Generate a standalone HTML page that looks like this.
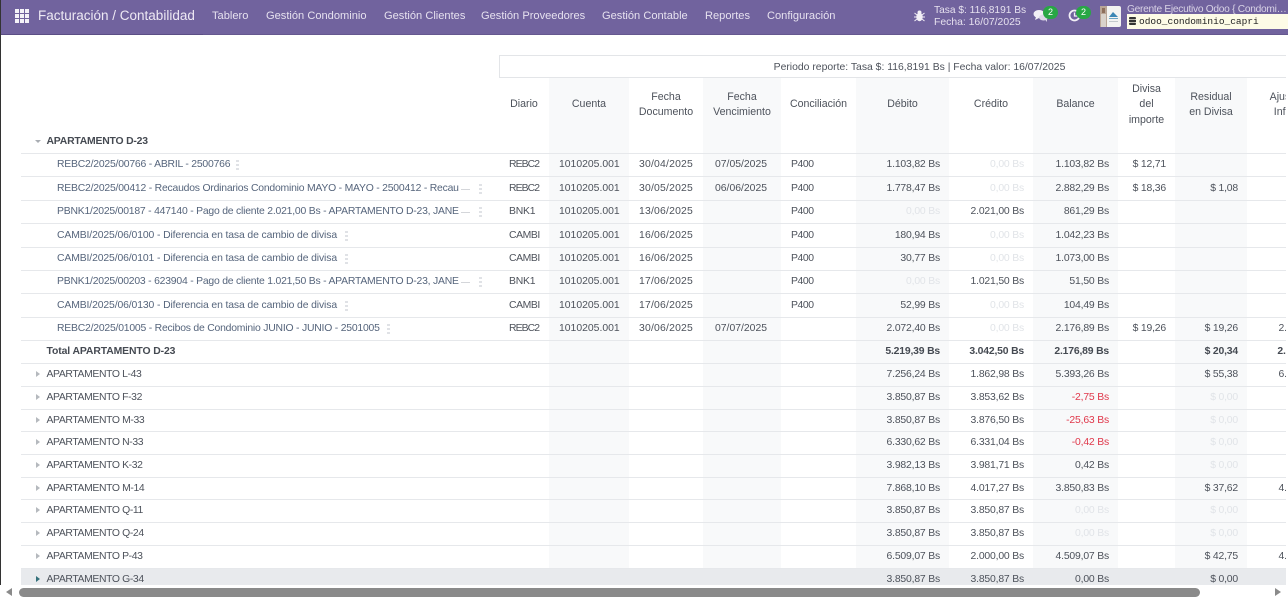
<!DOCTYPE html>
<html lang="es">
<head>
<meta charset="utf-8">
<title>Facturación / Contabilidad</title>
<style>
html,body{margin:0;padding:0;background:#fff}
body{width:1288px;height:598px;position:relative;overflow:hidden;font-family:"Liberation Sans",sans-serif;font-size:10.4px;color:#4d525b}
.edge{position:absolute;left:0;top:0;width:1px;height:585px;background:#333;z-index:5}
.nav{position:absolute;left:0;top:0;width:1288px;height:34px;background:#71639e;color:#e6e1ef;border-bottom:1px solid #65588f;box-sizing:content-box}
.navl{position:absolute;left:0;top:34px;width:203px;height:1px;background:#5b4e85}
.nav span.t{position:absolute;top:10px;line-height:13px;white-space:nowrap;font-size:11.1px}
.brand{position:absolute;left:38px;top:7px;line-height:18px;font-size:13.5px;white-space:nowrap;color:#eee9f4}
.grid{position:absolute;left:15px;top:9px;width:14px;height:14px;display:grid;grid-template-columns:4px 4px 4px;grid-template-rows:4px 4px 4px;gap:1px}
.grid i{background:#f4f2f8;display:block}
.badge{position:absolute;top:6px;width:15px;height:13px;border-radius:7px;background:#28a745;color:#fff;font-size:9px;line-height:13px;text-align:center}
.yellow{position:absolute;left:1127px;top:14px;width:161px;height:15px;background:#fdfbe6;color:#222;font-family:"Liberation Mono",monospace;font-size:9.5px;line-height:15px}
.yellow b{font-weight:normal;position:absolute;left:12px;top:0}
.wrap{position:absolute;left:1px;top:36px;width:1285px;height:549px;overflow:hidden;background:#fff}
.box{position:absolute;left:498px;top:19px;width:840px;height:23px;border:1px solid #e3e5e8;border-right:0;box-sizing:border-box;text-align:center;line-height:22px;padding-top:1px;color:#4d525b;font-size:10.4px}
table{position:absolute;left:20px;top:42px;border-collapse:separate;border-spacing:0;table-layout:fixed;width:1319px}
td,th{padding:0 9px;white-space:nowrap;overflow:hidden;line-height:12px;font-size:10.4px;font-weight:normal;box-sizing:border-box}
th{line-height:15.5px;text-align:center;white-space:normal;padding:2px 4px 0;vertical-align:middle;font-size:10.6px}
td{border-bottom:1px solid #e6e8eb;vertical-align:middle;padding-top:.5px}
.gl{background:#f8f9fa}
td.n{position:relative;padding-left:36px;color:#56657c;overflow:visible;letter-spacing:-.21px}
td.n.c{letter-spacing:-.12px}
td.g{padding-left:25.5px;position:relative;color:#4d525b;overflow:visible;letter-spacing:-.37px}
td.g.b{letter-spacing:-.2px}
td.l{padding-left:10px}
td.v{padding-left:12px}
td.dt{letter-spacing:.2px}
td.r{text-align:right;letter-spacing:-.18px}
td.b{font-weight:bold;color:#454a52}
td.d1{letter-spacing:-.9px}
td.d2{letter-spacing:-.4px}
td.d3{letter-spacing:-.2px}
td.p{letter-spacing:-.4px}
td.aj{padding-right:8px}
.z{color:#e1e4e8}
.red{color:#e0384b}
.k{position:absolute;top:50%;margin-top:-5px;width:3px;height:10px;background:repeating-linear-gradient(#e0e2e6 0 2px,transparent 2px 4px)}
.dots{position:absolute;top:50%;margin-top:0;left:440px;width:9px;height:1px;background:#d4d6da}
.ar{position:absolute;left:15px;top:50%;margin-top:-4px;width:0;height:0;border-left:4px solid #b5b9be;border-top:3px solid transparent;border-bottom:3px solid transparent}
.ad{position:absolute;left:14px;top:50%;margin-top:-2px;width:0;height:0;border-top:3px solid #a9adb3;border-left:3.5px solid transparent;border-right:3.5px solid transparent}
tr.hl td{background:#e8eaed}
.bar{position:absolute;left:0;top:585px;width:1288px;height:13px;background:#fff}
.thumb{position:absolute;left:19px;top:3px;width:1181px;height:9px;border-radius:5px;background:#8a8a8a}
.al{position:absolute;left:6px;top:3px;width:0;height:0;border-right:6px solid #8a8a8a;border-top:4.5px solid transparent;border-bottom:4.5px solid transparent}
.arr{position:absolute;left:1275px;top:3px;width:0;height:0;border-left:6px solid #8a8a8a;border-top:4.5px solid transparent;border-bottom:4.5px solid transparent}
</style>
</head>
<body>
<div class="edge"></div>
<div class="nav">
  <div class="grid"><i></i><i></i><i></i><i></i><i></i><i></i><i></i><i></i><i></i></div>
  <div class="brand">Facturación / Contabilidad</div>
  <span class="t" style="left:212px">Tablero</span>
  <span class="t" style="left:266px">Gestión Condominio</span>
  <span class="t" style="left:384px">Gestión Clientes</span>
  <span class="t" style="left:481px">Gestión Proveedores</span>
  <span class="t" style="left:602px">Gestión Contable</span>
  <span class="t" style="left:705px">Reportes</span>
  <span class="t" style="left:767px">Configuración</span>
  <svg style="position:absolute;left:914px;top:10px" width="11" height="12" viewBox="0 0 11 12"><ellipse cx="5.500" cy="7" rx="3.200" ry="4.200" fill="#f2eff6"/><circle cx="5.500" cy="2.500" r="2" fill="#f2eff6"/><path d="M0.500 3l2.500 2M10.500 3l-2.500 2M0 7h3M11 7H8M0.500 11l2.500-2M10.500 11L8 9" stroke="#f2eff6" stroke-width="1" fill="none"/></svg>
  <span class="t" style="left:934px;top:4px;font-size:10.2px">Tasa $: 116,8191 Bs</span>
  <span class="t" style="left:934px;top:16px;font-size:10.4px">Fecha: 16/07/2025</span>
  <svg style="position:absolute;left:1033px;top:9px" width="16" height="14" viewBox="0 0 16 14"><ellipse cx="6" cy="5" rx="5.500" ry="4" fill="#f2eff6"/><path d="M3 8l-1 3 4-2z" fill="#f2eff6"/><ellipse cx="10.500" cy="8.500" rx="4.500" ry="3" fill="#dcd7e8"/><path d="M12 10.500l2 2.500v-3z" fill="#dcd7e8"/></svg>
  <div class="badge" style="left:1043px">2</div>
  <svg style="position:absolute;left:1068px;top:9px" width="13" height="13" viewBox="0 0 13 13"><circle cx="6.500" cy="6.500" r="5" fill="none" stroke="#f2eff6" stroke-width="1.800"/><path d="M6.500 3.500v3.500h3" fill="none" stroke="#f2eff6" stroke-width="1.300"/></svg>
  <div class="badge" style="left:1076px">2</div>
  <svg style="position:absolute;left:1100px;top:6px" width="21" height="21" viewBox="0 0 21 21"><rect width="21" height="21" rx="2" fill="#f3f3f1"/><rect x="0" y="0" width="7" height="21" fill="#b9a596"/><rect x="2" y="2" width="3" height="5" fill="#8e6f5c"/><rect x="1" y="8" width="5" height="13" fill="#d9d2cb"/><path d="M9 11l4-5 5 5z" fill="#3c87b5"/><rect x="9" y="12" width="9" height="1" fill="#6aa5c6"/><rect x="9" y="15" width="9" height="1" fill="#c3c9cc"/></svg>
  <span class="t" style="left:1127px;top:3px;font-size:10.2px;color:#d9d3e6;letter-spacing:-.28px">Gerente Ejecutivo Odoo { Condomi…</span>
  <div class="yellow"><svg style="position:absolute;left:2px;top:3px" width="7" height="8" viewBox="0 0 7 8"><rect width="7" height="2.200" rx="1" fill="#333"/><rect y="2.900" width="7" height="2.200" fill="#333"/><rect y="5.800" width="7" height="2.200" rx="1" fill="#333"/></svg><b>odoo_condominio_capri</b></div>
</div>
<div class="navl"></div>
<div class="wrap">
  <div class="box">Periodo reporte: Tasa $: 116,8191 Bs | Fecha valor: 16/07/2025</div>
  <table>
    <colgroup>
      <col style="width:478px"><col style="width:50px"><col class="gl" style="width:80px"><col style="width:74px"><col class="gl" style="width:78px"><col style="width:75px"><col class="gl" style="width:93px"><col style="width:84px"><col class="gl" style="width:85px"><col style="width:57px"><col class="gl" style="width:72px"><col style="width:93px">
    </colgroup>
    <tr style="height:52px"><th></th><th>Diario</th><th>Cuenta</th><th>Fecha Documento</th><th>Fecha Vencimiento</th><th>Conciliación</th><th>Débito</th><th>Crédito</th><th>Balance</th><th>Divisa<br>del<br>importe</th><th>Residual<br>en Divisa</th><th>Ajuste por Inflación</th></tr>
    <tr style="height:24px"><td class="g b"><span class="ad"></span>APARTAMENTO D-23</td><td></td><td></td><td></td><td></td><td></td><td></td><td></td><td></td><td></td><td></td><td></td></tr>

    <tr style="height:23px"><td class="n">REBC2/2025/00766 - ABRIL - 2500766<span class="k" style="left:215px"></span></td><td class="l d1">REBC2</td><td class="l">1010205.001</td><td class="l dt">30/04/2025</td><td class="v">07/05/2025</td><td class="l p">P400</td><td class="r">1.103,82 Bs</td><td class="r z">0,00 Bs</td><td class="r">1.103,82 Bs</td><td class="r">$ 12,71</td><td></td><td></td></tr>
    <tr style="height:24px"><td class="n">REBC2/2025/00412 - Recaudos Ordinarios Condominio MAYO - MAYO - 2500412 - Recau<span class="dots"></span><span class="k" style="left:458px"></span></td><td class="l d1">REBC2</td><td class="l">1010205.001</td><td class="l dt">30/05/2025</td><td class="v">06/06/2025</td><td class="l p">P400</td><td class="r">1.778,47 Bs</td><td class="r z">0,00 Bs</td><td class="r">2.882,29 Bs</td><td class="r">$ 18,36</td><td class="r">$ 1,08</td><td></td></tr>
    <tr style="height:23px"><td class="n">PBNK1/2025/00187 - 447140 - Pago de cliente 2.021,00 Bs - APARTAMENTO D-23, JANE<span class="dots"></span><span class="k" style="left:458px"></span></td><td class="l d3">BNK1</td><td class="l">1010205.001</td><td class="l dt">13/06/2025</td><td></td><td class="l p">P400</td><td class="r z">0,00 Bs</td><td class="r">2.021,00 Bs</td><td class="r">861,29 Bs</td><td></td><td></td><td></td></tr>
    <tr style="height:24px"><td class="n c">CAMBI/2025/06/0100 - Diferencia en tasa de cambio de divisa<span class="k" style="left:324px"></span></td><td class="l d2">CAMBI</td><td class="l">1010205.001</td><td class="l dt">16/06/2025</td><td></td><td class="l p">P400</td><td class="r">180,94 Bs</td><td class="r z">0,00 Bs</td><td class="r">1.042,23 Bs</td><td></td><td></td><td></td></tr>
    <tr style="height:23px"><td class="n c">CAMBI/2025/06/0101 - Diferencia en tasa de cambio de divisa<span class="k" style="left:324px"></span></td><td class="l d2">CAMBI</td><td class="l">1010205.001</td><td class="l dt">16/06/2025</td><td></td><td class="l p">P400</td><td class="r">30,77 Bs</td><td class="r z">0,00 Bs</td><td class="r">1.073,00 Bs</td><td></td><td></td><td></td></tr>
    <tr style="height:23px"><td class="n">PBNK1/2025/00203 - 623904 - Pago de cliente 1.021,50 Bs - APARTAMENTO D-23, JANE<span class="dots"></span><span class="k" style="left:458px"></span></td><td class="l d3">BNK1</td><td class="l">1010205.001</td><td class="l dt">17/06/2025</td><td></td><td class="l p">P400</td><td class="r z">0,00 Bs</td><td class="r">1.021,50 Bs</td><td class="r">51,50 Bs</td><td></td><td></td><td></td></tr>
    <tr style="height:24px"><td class="n c">CAMBI/2025/06/0130 - Diferencia en tasa de cambio de divisa<span class="k" style="left:324px"></span></td><td class="l d2">CAMBI</td><td class="l">1010205.001</td><td class="l dt">17/06/2025</td><td></td><td class="l p">P400</td><td class="r">52,99 Bs</td><td class="r z">0,00 Bs</td><td class="r">104,49 Bs</td><td></td><td></td><td></td></tr>
    <tr style="height:23px"><td class="n">REBC2/2025/01005 - Recibos de Condominio JUNIO - JUNIO - 2501005<span class="k" style="left:366px"></span></td><td class="l d1">REBC2</td><td class="l">1010205.001</td><td class="l dt">30/06/2025</td><td class="v">07/07/2025</td><td></td><td class="r">2.072,40 Bs</td><td class="r z">0,00 Bs</td><td class="r">2.176,89 Bs</td><td class="r">$ 19,26</td><td class="r">$ 19,26</td><td class="r aj">2.176,89 Bs</td></tr>
    <tr style="height:23px"><td class="g b" style="letter-spacing:-.1px">Total APARTAMENTO D-23</td><td></td><td></td><td></td><td></td><td></td><td class="r b">5.219,39 Bs</td><td class="r b">3.042,50 Bs</td><td class="r b">2.176,89 Bs</td><td></td><td class="r b">$ 20,34</td><td class="r b aj">2.176,89 Bs</td></tr>

    <tr style="height:23px"><td class="g"><span class="ar"></span>APARTAMENTO L-43</td><td></td><td></td><td></td><td></td><td></td><td class="r">7.256,24 Bs</td><td class="r">1.862,98 Bs</td><td class="r">5.393,26 Bs</td><td></td><td class="r">$ 55,38</td><td class="r aj">6.393,26 Bs</td></tr>
    <tr style="height:23px"><td class="g"><span class="ar"></span>APARTAMENTO F-32</td><td></td><td></td><td></td><td></td><td></td><td class="r">3.850,87 Bs</td><td class="r">3.853,62 Bs</td><td class="r red">-2,75 Bs</td><td></td><td class="r z">$ 0,00</td><td></td></tr>
    <tr style="height:22px"><td class="g"><span class="ar"></span>APARTAMENTO M-33</td><td></td><td></td><td></td><td></td><td></td><td class="r">3.850,87 Bs</td><td class="r">3.876,50 Bs</td><td class="r red">-25,63 Bs</td><td></td><td class="r z">$ 0,00</td><td></td></tr>
    <tr style="height:23px"><td class="g"><span class="ar"></span>APARTAMENTO N-33</td><td></td><td></td><td></td><td></td><td></td><td class="r">6.330,62 Bs</td><td class="r">6.331,04 Bs</td><td class="r red">-0,42 Bs</td><td></td><td class="r z">$ 0,00</td><td></td></tr>
    <tr style="height:23px"><td class="g"><span class="ar"></span>APARTAMENTO K-32</td><td></td><td></td><td></td><td></td><td></td><td class="r">3.982,13 Bs</td><td class="r">3.981,71 Bs</td><td class="r">0,42 Bs</td><td></td><td class="r z">$ 0,00</td><td></td></tr>
    <tr style="height:22px"><td class="g"><span class="ar"></span>APARTAMENTO M-14</td><td></td><td></td><td></td><td></td><td></td><td class="r">7.868,10 Bs</td><td class="r">4.017,27 Bs</td><td class="r">3.850,83 Bs</td><td></td><td class="r">$ 37,62</td><td class="r aj">4.850,83 Bs</td></tr>
    <tr style="height:23px"><td class="g"><span class="ar"></span>APARTAMENTO Q-11</td><td></td><td></td><td></td><td></td><td></td><td class="r">3.850,87 Bs</td><td class="r">3.850,87 Bs</td><td class="r z">0,00 Bs</td><td></td><td class="r z">$ 0,00</td><td></td></tr>
    <tr style="height:23px"><td class="g"><span class="ar"></span>APARTAMENTO Q-24</td><td></td><td></td><td></td><td></td><td></td><td class="r">3.850,87 Bs</td><td class="r">3.850,87 Bs</td><td class="r z">0,00 Bs</td><td></td><td class="r z">$ 0,00</td><td></td></tr>
    <tr style="height:23px"><td class="g"><span class="ar"></span>APARTAMENTO P-43</td><td></td><td></td><td></td><td></td><td></td><td class="r">6.509,07 Bs</td><td class="r">2.000,00 Bs</td><td class="r">4.509,07 Bs</td><td></td><td class="r">$ 42,75</td><td class="r aj">4.509,07 Bs</td></tr>
    <tr class="hl" style="height:22px"><td class="g"><span class="ar" style="border-left-color:#33707a"></span>APARTAMENTO G-34</td><td></td><td></td><td></td><td></td><td></td><td class="r">3.850,87 Bs</td><td class="r">3.850,87 Bs</td><td class="r">0,00 Bs</td><td></td><td class="r">$ 0,00</td><td></td></tr>
  </table>
</div>
<div class="bar"><div class="al"></div><div class="thumb"></div><div class="arr"></div></div>
</body>
</html>
